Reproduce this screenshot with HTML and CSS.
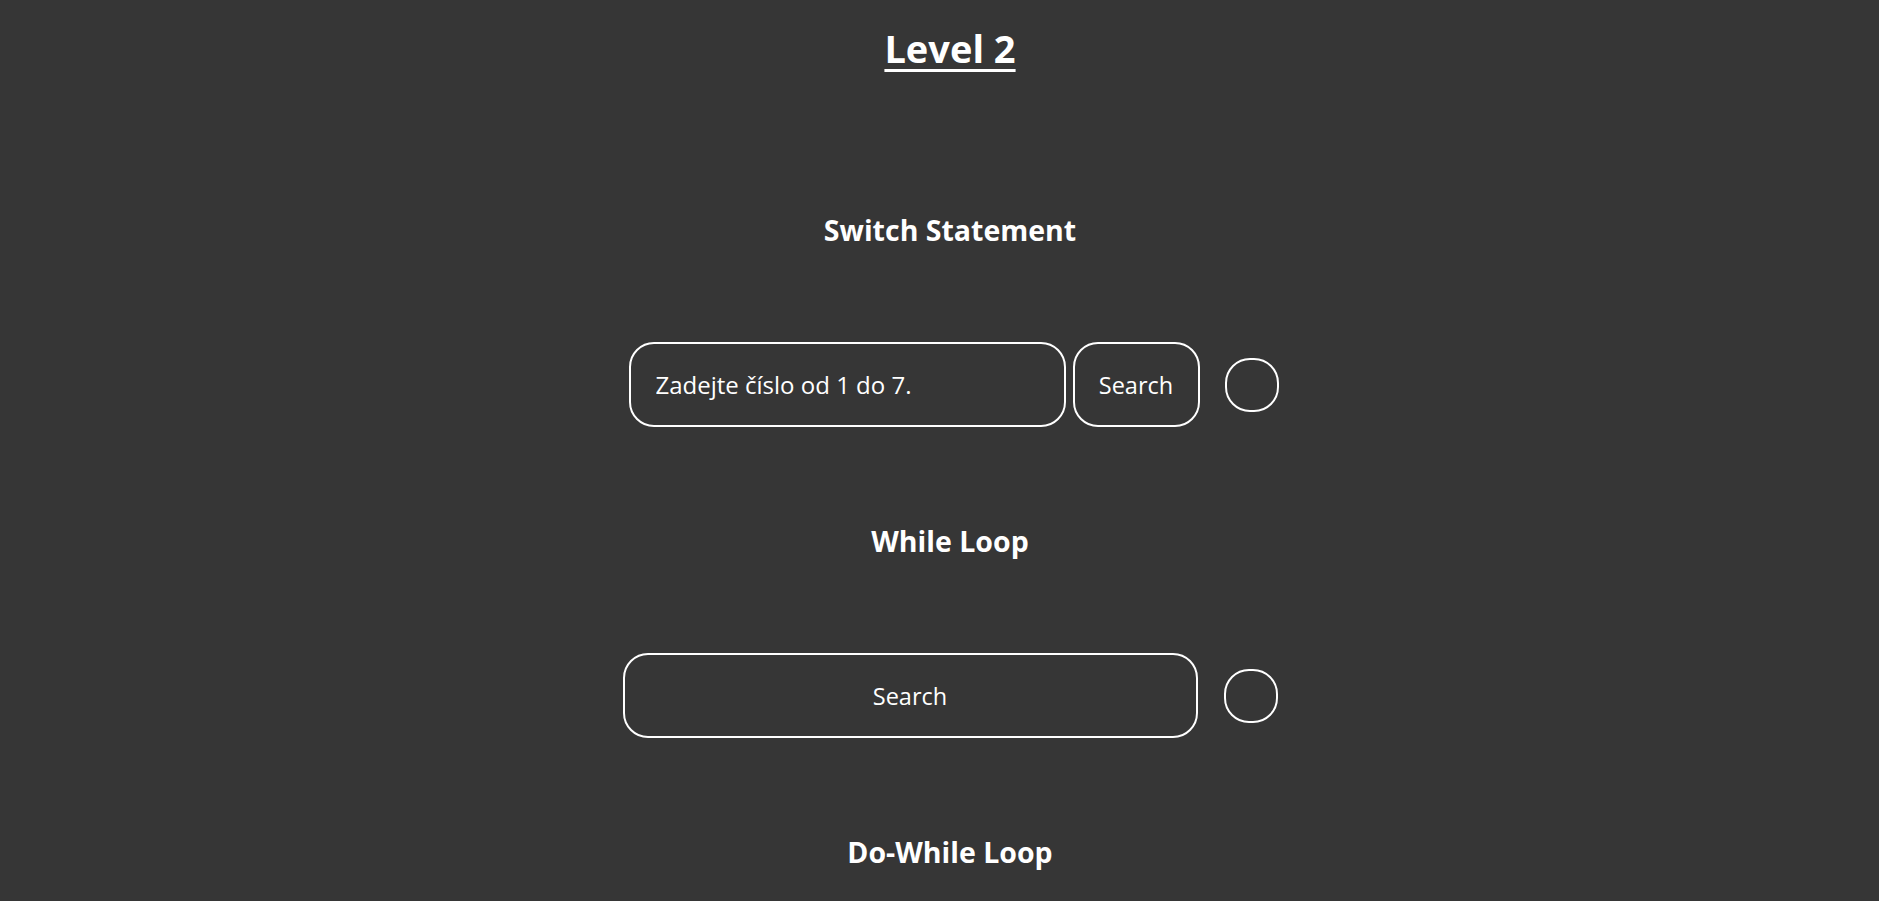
FILE: index.html
```html
<!DOCTYPE html>
<html lang="cs">
<head>
<meta charset="utf-8">
<title>Level 2</title>
<link rel="stylesheet" href="styles.css">
</head>
<body>
<main class="page">
  <h1 class="title">Level 2</h1>

  <section class="block">
    <h2 class="block-title">Switch Statement</h2>
    <div class="row row-switch">
      <input class="field" type="text" placeholder="Zadejte číslo od 1 do 7.">
      <button class="btn btn-small" type="button">Search</button>
      <div class="result"></div>
    </div>
  </section>

  <section class="block">
    <h2 class="block-title">While Loop</h2>
    <div class="row">
      <button class="btn btn-wide" type="button">Search</button>
      <div class="result result-wide"></div>
    </div>
  </section>

  <section class="block">
    <h2 class="block-title">Do-While Loop</h2>
  </section>
</main>
</body>
</html>
```

FILE: styles.css
```css
html, body {
  margin: 0;
  padding: 0;
  background: #363636;
  height: 100%;
  overflow: hidden;
}

body {
  color: #ffffff;
  font-family: "Open Sans", "Noto Sans", sans-serif;
}

.page {
  padding-left: 21px;
  display: flex;
  flex-direction: column;
  align-items: center;
  text-align: center;
}

.title {
  margin: 25px 0 0 0;
  font-size: 38px;
  line-height: 46px;
  font-weight: 700;
  text-decoration: underline;
  text-underline-offset: 6px;
  text-decoration-thickness: 3px;
}

.block {
  display: flex;
  flex-direction: column;
  align-items: center;
}

.block-title {
  margin: 0 0 95px 0;
  font-size: 28.5px;
  line-height: 34px;
  font-weight: 700;
}

.title + .block .block-title {
  margin-top: 142px;
}

.row {
  display: flex;
  align-items: center;
  margin-bottom: 97px;
}

.row-switch {
  padding-left: 7px;
}

.field {
  box-sizing: border-box;
  width: 437px;
  height: 85px;
  border: 2px solid #ffffff;
  border-radius: 25px;
  background: transparent;
  color: #ffffff;
  padding: 0 0 0 25px;
  font-family: inherit;
  font-size: 24px;
  outline: none;
}

.field::placeholder {
  color: #ffffff;
  opacity: 1;
}

.btn {
  box-sizing: border-box;
  height: 85px;
  border: 2px solid #ffffff;
  border-radius: 25px;
  background: transparent;
  color: #ffffff;
  font-family: inherit;
  font-size: 23.5px;
  padding: 0;
}

.btn-small {
  width: 127px;
  margin-left: 7px;
}

.btn-wide {
  width: 575px;
}

.result {
  box-sizing: border-box;
  width: 54px;
  height: 54px;
  border: 2px solid #ffffff;
  border-radius: 25px;
  margin-left: 25px;
}

.result-wide {
  margin-left: 26px;
}
```
